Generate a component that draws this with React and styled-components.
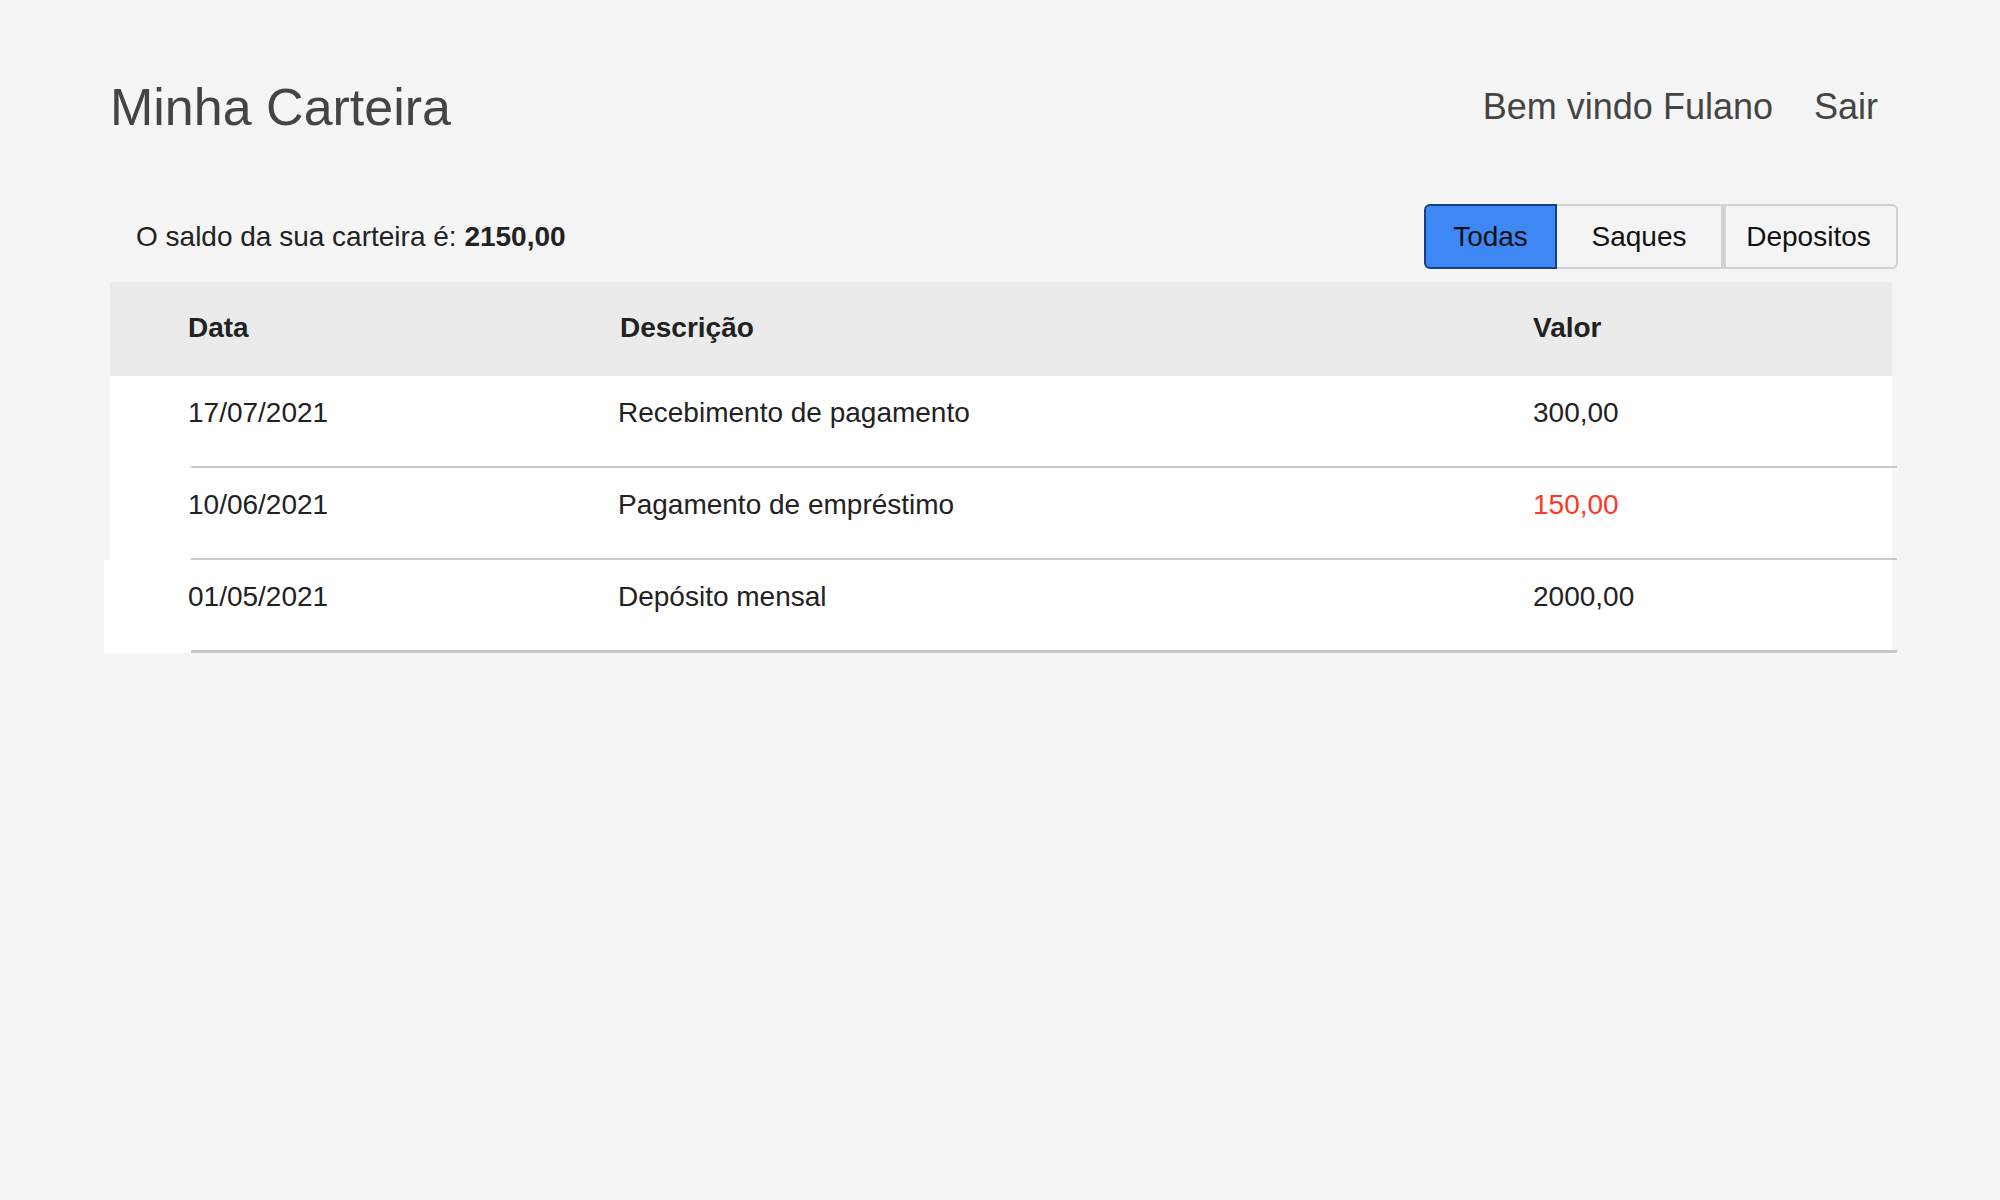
import React, { useState } from 'react'
import styled, { createGlobalStyle } from 'styled-components'

const GlobalStyle = createGlobalStyle`
  body {
    margin: 0;
    background: #f5f5f5;
    font-family: 'Liberation Sans', Arial, sans-serif;
  }
`

const transactions = [
  { id: 1, date: '17/07/2021', description: 'Recebimento de pagamento', value: '300,00', type: 'deposit' },
  { id: 2, date: '10/06/2021', description: 'Pagamento de empréstimo', value: '150,00', type: 'withdraw' },
  { id: 3, date: '01/05/2021', description: 'Depósito mensal', value: '2000,00', type: 'deposit' },
]

const filters = [
  { key: 'all', label: 'Todas', width: 133, nudge: 0 },
  { key: 'withdraw', label: 'Saques', width: 166, nudge: 0 },
  { key: 'deposit', label: 'Depositos', width: 175, nudge: 5 },
]

const App = () => {
  const [filter] = useState('all')

  return (
    <>
      <GlobalStyle />
      <Page>
        <Header>
          <Title>Minha Carteira</Title>
          <UserArea>
            <span>Bem vindo Fulano</span>
            <span>Sair</span>
          </UserArea>
        </Header>

        <BalanceBar>
          <Balance>
            O saldo da sua carteira é: <strong>2150,00</strong>
          </Balance>
          <FilterGroup>
            {filters.map((f) => (
              <FilterButton
                key={f.key}
                $active={f.key === filter}
                $width={f.width}
                $nudge={f.nudge}
              >
                {f.label}
              </FilterButton>
            ))}
          </FilterGroup>
        </BalanceBar>

        <Table>
          <HeadRow>
            <HeadCell>Data</HeadCell>
            <HeadCell $shift={2}>Descrição</HeadCell>
            <HeadCell>Valor</HeadCell>
          </HeadRow>
          {transactions.map((t, i) => {
            const last = i === transactions.length - 1
            return (
              <RowWrap key={t.id} $last={last}>
                <Row>
                  <Cell>{t.date}</Cell>
                  <Cell>{t.description}</Cell>
                  <Cell $negative={t.type === 'withdraw'}>{t.value}</Cell>
                </Row>
                <Divider $last={last} />
              </RowWrap>
            )
          })}
        </Table>
      </Page>
    </>
  )
}

const Page = styled.div`
  padding: 81px 108px 0 110px;
`

const Header = styled.header`
  display: flex;
  align-items: center;
  justify-content: space-between;
  height: 51px;
`

const Title = styled.h1`
  margin: 0;
  font-size: 52px;
  line-height: 1;
  font-weight: 400;
  color: #444;
`

const UserArea = styled.nav`
  display: flex;
  gap: 41px;
  margin-right: 14px;
  font-size: 36px;
  line-height: 1;
  color: #444;
`

const BalanceBar = styled.div`
  display: flex;
  align-items: center;
  justify-content: space-between;
  margin: 72px -6px 0 0;
  height: 65px;
`

const Balance = styled.p`
  margin: 0 0 0 26px;
  font-size: 28px;
  line-height: 1;
  color: #222;

  strong {
    font-weight: 700;
  }
`

const FilterGroup = styled.div`
  display: flex;
  height: 65px;
`

const FilterButton = styled.button`
  box-sizing: border-box;
  width: ${(p) => p.$width}px;
  height: 65px;
  padding: 0 ${(p) => p.$nudge}px 0 0;
  font-family: inherit;
  font-size: 28px;
  line-height: 1;
  color: #111;
  background: ${(p) => (p.$active ? '#3d88f5' : '#f4f4f4')};
  border: 2px solid ${(p) => (p.$active ? '#173f86' : '#d2d2d2')};
  border-radius: 0;
  cursor: pointer;

  & + & {
    border-left-width: ${(p) => (p.$active ? '2px' : '0')};
  }
  &:first-child {
    border-radius: 6px 0 0 6px;
  }
  &:last-child {
    border-radius: 0 6px 6px 0;
    border-left: 3px solid #d2d2d2;
  }
`

const Table = styled.div`
  margin-top: 13px;
`

const HeadRow = styled.div`
  display: grid;
  grid-template-columns: 430px 915px 1fr;
  box-sizing: border-box;
  height: 94px;
  padding: 32px 0 0 78px;
  background: #ebebeb;
`

const HeadCell = styled.div`
  padding-left: ${(p) => p.$shift || 0}px;
  font-size: 28px;
  line-height: 1;
  font-weight: 700;
  color: #222;
`

const RowWrap = styled.div`
  margin-left: ${(p) => (p.$last ? '-6px' : '0')};
  padding-left: ${(p) => (p.$last ? '6px' : '0')};
  background: #fff;
`

const Row = styled.div`
  display: grid;
  grid-template-columns: 430px 915px 1fr;
  box-sizing: border-box;
  height: 90px;
  padding: 23px 0 0 78px;
`

const Cell = styled.div`
  font-size: 28px;
  line-height: 1;
  color: ${(p) => (p.$negative ? '#fa3a26' : '#222')};
`

const Divider = styled.div`
  height: ${(p) => (p.$last ? '3px' : '2px')};
  margin: 0 -5px 0 81px;
  background: #c9c9cd;
`

export default App
